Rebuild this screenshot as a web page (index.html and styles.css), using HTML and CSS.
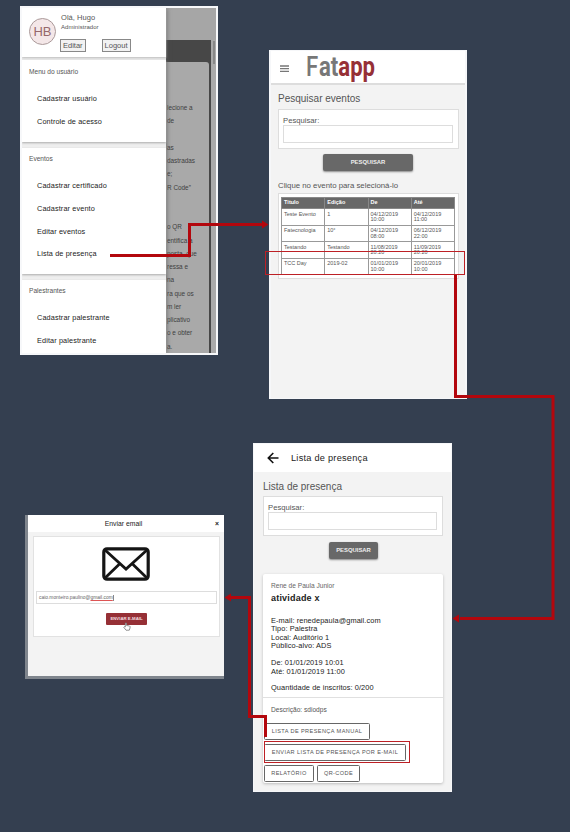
FILE: index.html
```html
<!DOCTYPE html>
<html lang="pt-BR">
<head>
<meta charset="utf-8">
<title>Fatapp</title>
<link rel="stylesheet" href="styles.css">
</head>
<body>
<main class="canvas">
  <section class="screen menu-screen">
    <div class="drawer">
      <header class="profile">
        <span class="avatar">HB</span>
        <div class="who">
          <div class="hello">Olá, Hugo</div>
          <div class="role">Administrador</div>
          <div class="actions"><span class="mini">Editar</span><span class="mini">Logout</span></div>
        </div>
      </header>
      <nav class="group g1"><h4>Menu do usuário</h4><a>Cadastrar usuário</a><a>Controle de acesso</a></nav>
      <nav class="group g2"><h4>Eventos</h4><a>Cadastrar certificado</a><a>Cadastrar evento</a><a>Editar eventos</a><a>Lista de presença</a></nav>
      <nav class="group g3"><h4>Palestrantes</h4><a>Cadastrar palestrante</a><a>Editar palestrante</a></nav>
    </div>
    <div class="behind">
      <div class="behind-top"></div>
      <div class="behind-body">
        <div class="behind-text">lecione a<br>de<br><br>as<br>dastradas<br>e;<br>R Code”<br><br><br>o QR<br>entifica a<br>posta, que<br>ressa e<br>na<br>ra que os<br>m ler<br>plicativo<br>o e obter<br>a.</div>
        <div class="behind-scroll"></div>
      </div>
    </div>
  </section>

  <section class="screen search-screen">
    <header class="appbar">
      <svg class="burger" viewBox="0 0 10 8"><path d="M0 1h9M0 3.7h9M0 6.4h9" stroke="#777" stroke-width="1.3"/></svg>
      <div class="logo"><span class="cap">F</span><span>at</span><b>app</b></div>
    </header>
    <h2 class="title">Pesquisar eventos</h2>
    <div class="search-box"><label>Pesquisar:</label><div class="field"></div></div>
    <div class="btn wide">PESQUISAR</div>
    <h3 class="hint">Clique no evento para selecioná-lo</h3>
    <div class="table-box">
      <table>
        <tr><th>Título</th><th>Edição</th><th>De</th><th>Até</th></tr>
        <tr><td>Teste Evento</td><td>1</td><td>04/12/2019<br>10:00</td><td>04/12/2019<br>11:00</td></tr>
        <tr><td>Fatecnologia</td><td>10°</td><td>04/12/2019<br>08:00</td><td>06/12/2019<br>22:00</td></tr>
        <tr><td>Testando</td><td>Testando</td><td>11/08/2019<br>20:20</td><td>11/09/2019<br>20:20</td></tr>
        <tr><td>TCC Day</td><td>2019-02</td><td>01/01/2019<br>10:00</td><td>20/01/2019<br>10:00</td></tr>
      </table>
    </div>
  </section>

  <section class="screen list-screen">
    <header class="backbar">
      <svg class="back" viewBox="0 0 12 12"><path d="M11.5 6H1.5M6.3 1L1.3 6l5 5" fill="none" stroke="#111" stroke-width="1.6"/></svg>
      <span>Lista de presença</span>
    </header>
    <h2 class="title">Lista de presença</h2>
    <div class="search-box"><label>Pesquisar:</label><div class="field"></div></div>
    <div class="btn small">PESQUISAR</div>
    <article class="card">
      <div class="info">
        <div class="author">Rene de Paula Junior</div>
        <div class="name">atividade x</div>
        <p>E-mail: renedepaula@gmail.com<br>Tipo: Palestra<br>Local: Auditório 1<br>Público-alvo: ADS</p>
        <p>De: 01/01/2019 10:01<br>Até: 01/01/2019 11:00</p>
        <p>Quantidade de inscritos: 0/200</p>
      </div>
      <div class="desc">Descrição: sdiodps</div>
      <div class="row"><span class="outline o1">LISTA DE PRESENÇA MANUAL</span></div>
      <div class="row"><span class="outline o2">ENVIAR LISTA DE PRESENÇA POR E-MAIL</span></div>
      <div class="row"><span class="outline o3">RELATÓRIO</span><span class="outline o4">QR-CODE</span></div>
    </article>
  </section>

  <section class="screen mail-screen">
    <div class="modal">
      <header class="modal-head"><span></span><span>Enviar email</span><span class="close">×</span></header>
      <div class="mail-box">
        <svg class="envelope" viewBox="0 0 48 34"><rect x="1.8" y="1.8" width="44.4" height="30.4" rx="3.2" fill="#fff" stroke="#151515" stroke-width="3.2"/><path d="M3 3L24 22L45 3M3 31L17.500 17M45 31L30.500 17" fill="none" stroke="#151515" stroke-width="2.800"/></svg>
        <div class="mail-field">caio.monteiro.paulino@<u>gmail.com</u><i></i></div>
        <div class="send">ENVIAR E-MAIL
          <svg class="hand" viewBox="0 0 8 9"><path d="M2.300 5V1.200Q3 .2 3.600 1.200V3.500L6.500 4Q7.500 4.300 7 6L6.300 8.200H3L.8 5.300Q1.200 4.200 2.300 5Z" fill="#fff" stroke="#666" stroke-width=".7"/></svg>
        </div>
      </div>
    </div>
  </section>

  <svg class="links" viewBox="0 0 570 832">
    <g fill="none" stroke="#b3070d" stroke-width="3">
      <path d="M110 255.500H189.500V224.500H262"/>
      <path d="M455.500 275V396.500H553V618.500H460"/>
      <path d="M265.500 737V716.500H249.500V597.500H231"/>
    </g>
    <g fill="#b3070d"><path d="M262 220.500L268.500 224.500L262 228.500Z"/><path d="M459 614.500L452.500 618.500L459 622.500Z"/><path d="M231 593.500L224.500 597.500L231 601.500Z"/></g>
    <g fill="none" stroke="#bd2025" stroke-width="1"><rect x="265.500" y="251.500" width="199" height="23"/><rect x="264.500" y="741.500" width="145" height="21"/></g>
  </svg>
</main>
</body>
</html>
```
FILE: styles.css
```css
* { box-sizing: border-box; }
body { margin: 0; background: #343f50; font-family: "Liberation Sans", sans-serif; color: #333; }
h2, h3, h4, p { margin: 0; font-weight: 400; }
.canvas { position: relative; width: 570px; height: 832px; overflow: hidden; }
.screen { position: absolute; overflow: hidden; isolation: isolate; background: #f3f3f3; }
.links { position: absolute; left: 0; top: 0; width: 570px; height: 832px; z-index: 2; }

.menu-screen { left: 20px; top: 6px; width: 198px; height: 349px; border: 2px solid #f7f8fa; display: flex; }
.drawer { width: 144px; flex: none; background: #eee; box-shadow: 0 0 5px #555; z-index: 1; }
.profile { height: 49px; background: #fff; display: flex; box-shadow: 0 1px 2px #bbb; }
.avatar { width: 27px; height: 27px; margin: 10px 0 0 7px; border: 1px solid #a99; border-radius: 50%; background: #f4e7e8; color: #96676b; font-size: 13px; line-height: 26px; text-align: center; }
.who { margin: 5px 0 0 5px; }
.hello { font-size: 7.5px; line-height: 9px; color: #555; letter-spacing: .05px; }
.role { font-size: 6px; line-height: 10px; color: #555; letter-spacing: .05px; }
.actions { display: flex; gap: 16px; margin: 7px 0 0 -1px; }
.mini { height: 13px; padding: 0 2px; border: 1px solid #888; background: #f2f2f2; font-size: 7.5px; line-height: 11px; color: #555; }
.group { background: #fff; box-shadow: 0 1px 2px #aaa; }
.group h4 { font-size: 6.6px; line-height: 8px; color: #555; padding: 8px 0 11px 7px; }
.group a { display: block; padding-left: 15px; height: 22.8px; line-height: 23px; font-size: 7.3px; color: #222; letter-spacing: .12px; }
.g1 { margin-top: 3px; height: 82px; }
.g2 { margin-top: 6px; height: 126px; }
.g2 h4 { padding-top: 7px; padding-bottom: 11px; }
.g3 { margin-top: 6px; height: 80px; }
.g3 h4 { padding-top: 7px; }
.behind { width: 50px; background: #a9a9a9; overflow: hidden; }
.behind-top { height: 32px; background: #a6a6a6; }
.behind-body { height: 313px; background: linear-gradient(#474747, #474747) 0 0 / 45px 100% no-repeat #aaa; display: flex; padding-top: 22px; }
.behind-text { width: 43px; height: 291px; padding: 39px 0 0 1px; border-radius: 0 3px 0 0; background: #a9a9a9; font-size: 6.4px; line-height: 13.25px; white-space: nowrap; color: #3f3f3f; }
.behind-scroll { width: 2px; height: 23px; margin: -21px 0 0 4px; background: #888; }

.search-screen { left: 269px; top: 50px; width: 198px; height: 349px; border: 2px solid #f6f7f9; border-width: 1px 2px; }
.appbar { height: 34px; display: flex; background: #fff; border-bottom: 2px solid #ddd; }
.burger { width: 10px; height: 8px; margin: 14px 0 0 9px; }
.logo { height: 32px; font: 700 28px/31px Roboto, sans-serif; padding-left: 16px; color: #777; transform: scaleX(.79); transform-origin: 16px 0; white-space: nowrap; }
.cap { font-weight: 500; letter-spacing: 1px; }
.logo b { color: #963036; font-weight: 700; }
.title { font-size: 10px; line-height: 12px; color: #555; padding-left: 7px; }
.search-screen .title { margin-top: 8px; }
.search-box { margin: 4px 6px 0 7px; height: 40px; padding: 6px 5px 0 4px; background: #fff; border: 1px solid #ddd; }
.search-box label { display: block; font-size: 7.7px; line-height: 9px; color: #555; }
.field { height: 18px; border: 1px solid #ddd; background: #fff; }
.btn { background: #686868; color: #eee; border-radius: 2px; box-shadow: 0 1px 2px #888; text-align: center; height: 17px; line-height: 17px; font-size: 5.9px; font-weight: 700; }
.wide { width: 90px; margin: 5px 0 0 52px; }
.hint { font-size: 7.8px; line-height: 9px; margin: 10px 0 0 7px; color: #555; }
.table-box { margin: 3px 6px 0 7px; height: 86px; padding: 3px 2px; background: #fff; border: 1px solid #ddd; }
table { width: 174px; table-layout: fixed; border-collapse: collapse; font-size: 5.5px; line-height: 5.5px; color: #555; }
th, td { padding: 2.5px 2px 0; text-align: left; vertical-align: top; border: 1px solid #999; height: 16.5px; }
th { height: 11px; background: #686868; color: #fff; border-color: #888; padding-top: 2px; }

.list-screen { left: 253px; top: 443px; width: 199px; height: 349px; border: 1px solid #f6f7f9; }
.backbar { height: 28px; display: flex; align-items: center; gap: 12px; padding-left: 13px; background: #fff; font-size: 9.2px; color: #222; letter-spacing: .25px; }
.back { width: 12px; height: 12px; }
.list-screen .title { margin-top: 9px; padding-left: 9px; }
.list-screen .search-box { margin: 3px 8px 0 9px; }
.small { width: 49px; margin: 6px 0 0 75px; }
.card { width: 180px; height: 209px; margin: 15px 0 0 9px; background: #fff; border-radius: 2px; box-shadow: 0 1px 3px #bbb; }
.info { height: 124px; padding: 7px 0 0 8px; border-bottom: 1px solid #e0e0e0; }
.author { font-size: 6.6px; line-height: 9px; color: #666; }
.name { font-size: 9px; line-height: 12px; font-weight: 700; color: #222; margin: 2px 0 13px; letter-spacing: .2px; }
.info p { font-size: 7.4px; line-height: 8.4px; color: #222; margin-bottom: 8.5px; letter-spacing: .08px; }
.desc { height: 25px; padding-left: 8px; font-size: 6.6px; line-height: 23px; color: #555; }
.row { display: flex; gap: 3px; height: 21px; padding-left: 1px; }
.outline { height: 17px; border: 1px solid #666; border-radius: 1.5px; font-size: 5.6px; line-height: 15px; color: #555; text-align: center; white-space: nowrap; letter-spacing: .4px; }
.o1 { width: 106px; }
.o2 { width: 142px; }
.o3 { width: 50px; }
.o4 { width: 43px; }

.mail-screen { left: 25px; top: 515px; width: 199px; height: 164px; background: #7f858d; padding: 0 0 3px 3px; }
.modal { height: 161px; background: #f3f3f3; }
.modal-head { height: 17px; padding-right: 5px; display: grid; grid-template-columns: 1fr auto 1fr; align-items: center; background: #fff; font-size: 6.8px; color: #222; }
.close { text-align: right; font-weight: 700; }
.mail-box { margin: 4px 4px 0 5px; height: 101px; background: #fff; border: 1px solid #e2e2e2; }
.envelope { display: block; width: 48px; height: 34px; margin: 10px 0 0 68px; }
.mail-field { margin: 10px 2px 0 2px; height: 13px; border: 1px solid #ddd; padding-left: 2px; font-size: 4.9px; line-height: 11px; color: #666; }
.mail-field u { text-decoration-color: #d55; }
.mail-field i { display: inline-block; width: 1px; height: 6px; background: #888; vertical-align: middle; }
.send { position: relative; width: 41px; height: 12px; margin: 9px 0 0 72px; background: #963036; border-radius: 1px; color: #f4dfe0; font-size: 4.3px; line-height: 12px; font-weight: 700; text-align: center; }
.hand { position: absolute; left: 17px; top: 9px; width: 8px; height: 9px; }
```
